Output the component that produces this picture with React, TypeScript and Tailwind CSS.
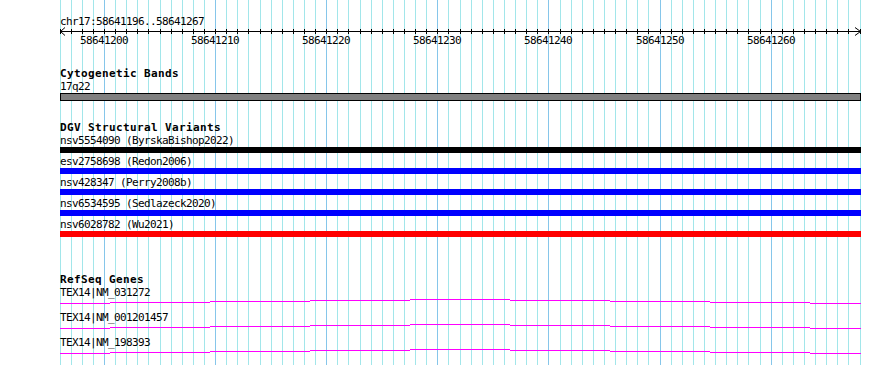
import * as React from "react";

const START = 58641196;
const SPAN = 72;
const LEFT = 60;
const WIDTH = 800;

// one vertical line per base, a darker one every 10 bp
const gridLines = Array.from({ length: SPAN + 1 }, (_, i) => ({
  x: Math.floor(LEFT + (i * WIDTH) / SPAN),
  pos: START + i,
}));

const variants = [
  { label: "nsv5554090 (ByrskaBishop2022)", color: "bg-black" },
  { label: "esv2758698 (Redon2006)", color: "bg-[#0000ff]" },
  { label: "nsv428347 (Perry2008b)", color: "bg-[#0000ff]" },
  { label: "nsv6534595 (Sedlazeck2020)", color: "bg-[#0000ff]" },
  { label: "nsv6028782 (Wu2021)", color: "bg-[#ff0000]" },
];

const genes = ["TEX14|NM_031272", "TEX14|NM_001201457", "TEX14|NM_198393"];

// shallow connector: steps up toward the middle, then back down
const steps = [
  [0, 50, 0],
  [50, 150, 1],
  [150, 250, 2],
  [250, 350, 3],
  [350, 450, 4],
  [450, 550, 3],
  [550, 650, 2],
  [650, 750, 1],
  [750, 801, 0],
];

const mono = "font-['DejaVu_Sans_Mono',monospace] text-black whitespace-nowrap";
const small = `${mono} text-[11px] leading-[13px] h-[13px] tracking-[-0.62px]`;
const title = `${mono} text-[11px] leading-[13px] h-[13px] font-bold tracking-[0.38px]`;

const Grid = () => (
  <svg className="absolute left-0 top-0" width={890} height={365} shapeRendering="crispEdges">
    {gridLines.map((g) => (
      <line
        key={g.pos}
        x1={g.x + 0.5}
        x2={g.x + 0.5}
        y1={0}
        y2={365}
        stroke={g.pos % 10 === 0 ? "#86c6ea" : "#a2e6ea"}
        strokeWidth={1}
      />
    ))}
  </svg>
);

const Ruler = () => (
  <svg width={801} height={20} className="block overflow-visible" shapeRendering="crispEdges">
    <line x1={0} x2={801} y1={3.5} y2={3.5} stroke="#000" />
    {gridLines.map((g) => (
      <line key={g.pos} x1={g.x - LEFT + 0.5} x2={g.x - LEFT + 0.5} y1={1} y2={6} stroke="#000" />
    ))}
    <polyline points="5,-0.5 0.5,3.5 5,7.5" fill="none" stroke="#000" shapeRendering="auto" />
    <polyline points="795,-0.5 800.5,3.5 795,7.5" fill="none" stroke="#000" shapeRendering="auto" />
    {gridLines
      .filter((g) => g.pos % 10 === 0)
      .map((g) => (
        <text
          key={g.pos}
          x={g.x - LEFT}
          y={16}
          textAnchor="middle"
          fontFamily="DejaVu Sans Mono, monospace"
          fontSize={11}
          letterSpacing={-0.62}
          fill="#000"
        >
          {g.pos}
        </text>
      ))}
  </svg>
);

const GeneLine = () => (
  <svg width={801} height={12} className="block" shapeRendering="crispEdges">
    {steps.map(([a, b, up]) => (
      <line key={a} x1={a} x2={b} y1={4.5 - up} y2={4.5 - up} stroke="#ff00ff" strokeWidth={1} />
    ))}
  </svg>
);

export default function App() {
  return (
    <div className="relative w-[890px] h-[365px] bg-white overflow-hidden">
      <Grid />
      <div className="relative pl-[60px] w-[861px] flex flex-col">
        <div className={`${small} mt-[15px]`}>chr17:58641196..58641267</div>
        <Ruler />

        <div className={`${title} mt-[19px]`}>Cytogenetic Bands</div>
        <div className={small}>17q22</div>
        <div className="h-[8px] w-full bg-[#808080] border border-black" />

        <div className={`${title} mt-[20px]`}>DGV Structural Variants</div>
        {variants.map((v) => (
          <div key={v.label} className="flex flex-col pb-[2px]">
            <div className={small}>{v.label}</div>
            <div className={`h-[6px] w-full ${v.color}`} />
          </div>
        ))}

        <div className={`${title} mt-[34px]`}>RefSeq Genes</div>
        {genes.map((g) => (
          <div key={g} className="flex flex-col">
            <div className={small}>{g}</div>
            <GeneLine />
          </div>
        ))}
      </div>
    </div>
  );
}
